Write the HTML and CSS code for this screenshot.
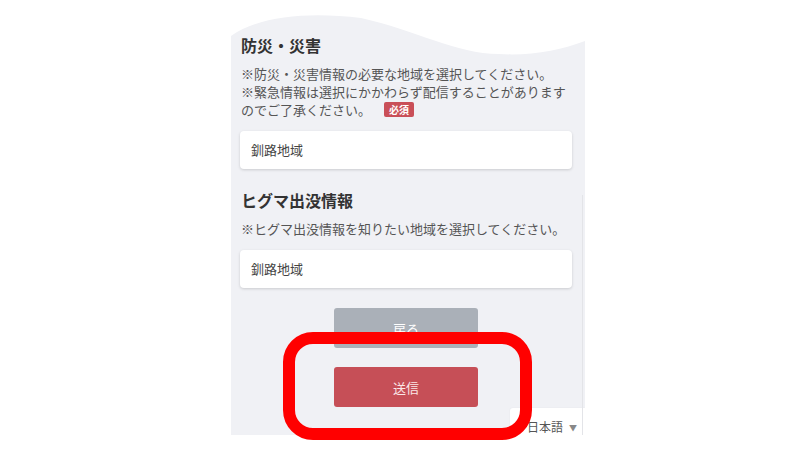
FILE: index.html
```html
<!DOCTYPE html>
<html lang="ja">
<head>
    <meta charset="UTF-8">
    <meta name="viewport" content="width=device-width, initial-scale=1.0">
    <title>配信地域の設定</title>
    <link rel="stylesheet" href="styles.css">
</head>
<body>
    <div class="page">
        <div class="phone">
            <svg class="wave" width="354" height="60" viewBox="0 0 354 60">
                <path d="M0 0 H354 V41 C330 50 300 56 268 54 C225 54 185 30 130 18 C80 12 30 15 0 36 Z" fill="#ffffff"/>
            </svg>

            <form class="form">
                <div class="section">
                    <h2>防災・災害</h2>
                    <p class="note">※防災・災害情報の必要な地域を選択してください。<br>※緊急情報は選択にかかわらず配信することがありますのでご了承ください。<span class="badge">必須</span></p>
                    <div class="select">釧路地域</div>
                </div>

                <div class="section">
                    <h2>ヒグマ出没情報</h2>
                    <p class="note">※ヒグマ出没情報を知りたい地域を選択してください。</p>
                    <div class="select">釧路地域</div>
                </div>

                <div class="actions">
                    <button type="button" class="btn btn-back">戻る</button>
                    <button type="button" class="btn btn-submit">送信</button>
                </div>
            </form>

            <div class="lang">日本語<span class="caret">▼</span></div>
        </div>

        <div class="highlight"></div>
    </div>
</body>
</html>
```

FILE: styles.css
```css
body {
    margin: 0;
    background: #ffffff;
    font-family: "Noto Sans CJK JP", "Noto Sans", sans-serif;
}
.page {
    position: relative;
    width: 800px;
    height: 465px;
    overflow: hidden;
}
.phone {
    position: relative;
    width: 354px;
    height: 435px;
    margin-left: 231px;
    background: #f0f1f5;
    overflow: hidden;
}
.phone::after {
    content: "";
    position: absolute;
    right: 2px;
    top: 195px;
    bottom: 0;
    width: 1px;
    background: #e3e4e8;
}
.wave {
    position: absolute;
    top: 0;
    left: 0;
}
.form {
    position: relative;
    padding: 34px 13px 0 9px;
}
.section + .section {
    margin-top: 20px;
}
h2 {
    margin: 0 0 9px;
    padding-left: 1px;
    font-size: 16px;
    line-height: 22px;
    font-weight: bold;
    color: #333333;
}
.note {
    margin: 0;
    padding-left: 1px;
    font-size: 13px;
    line-height: 18px;
    color: #555555;
}
.badge {
    display: inline-block;
    margin-left: 13px;
    padding: 0 5px;
    line-height: 15px;
    font-size: 10px;
    font-weight: bold;
    color: #ffffff;
    background: #c94f58;
    border-radius: 2px;
    vertical-align: 1px;
}
.select {
    margin-top: 12px;
    height: 38px;
    line-height: 38px;
    padding-left: 11px;
    font-size: 13px;
    color: #444444;
    background: #ffffff;
    border-radius: 4px;
    box-shadow: 0 1px 3px rgba(0, 0, 0, 0.16);
}
.actions {
    display: flex;
    flex-direction: column;
    align-items: center;
    gap: 19px;
    margin-top: 20px;
}
.btn {
    width: 144px;
    height: 40px;
    border: none;
    border-radius: 3px;
    font-family: inherit;
    font-size: 13px;
    color: #ffffff;
}
.btn-back {
    background: #aab0b8;
}
.btn-submit {
    background: #c64f57;
    color: #fbe6e7;
}
.lang {
    position: absolute;
    right: 0;
    top: 408px;
    width: 75px;
    height: 27px;
    padding: 11px 0 0 17px;
    box-sizing: border-box;
    white-space: nowrap;
    font-size: 12px;
    line-height: 16px;
    color: #555555;
    background: #ffffff;
    border-radius: 3px 0 0 0;
    box-shadow: 0 0 2px rgba(0, 0, 0, 0.06);
}
.caret {
    margin-left: 6px;
    font-size: 8px;
    vertical-align: 1px;
    color: #888888;
}
.highlight {
    position: absolute;
    left: 283px;
    top: 332px;
    width: 249px;
    height: 108px;
    box-sizing: border-box;
    border: 12px solid #ff0000;
    border-radius: 30px;
}
```
